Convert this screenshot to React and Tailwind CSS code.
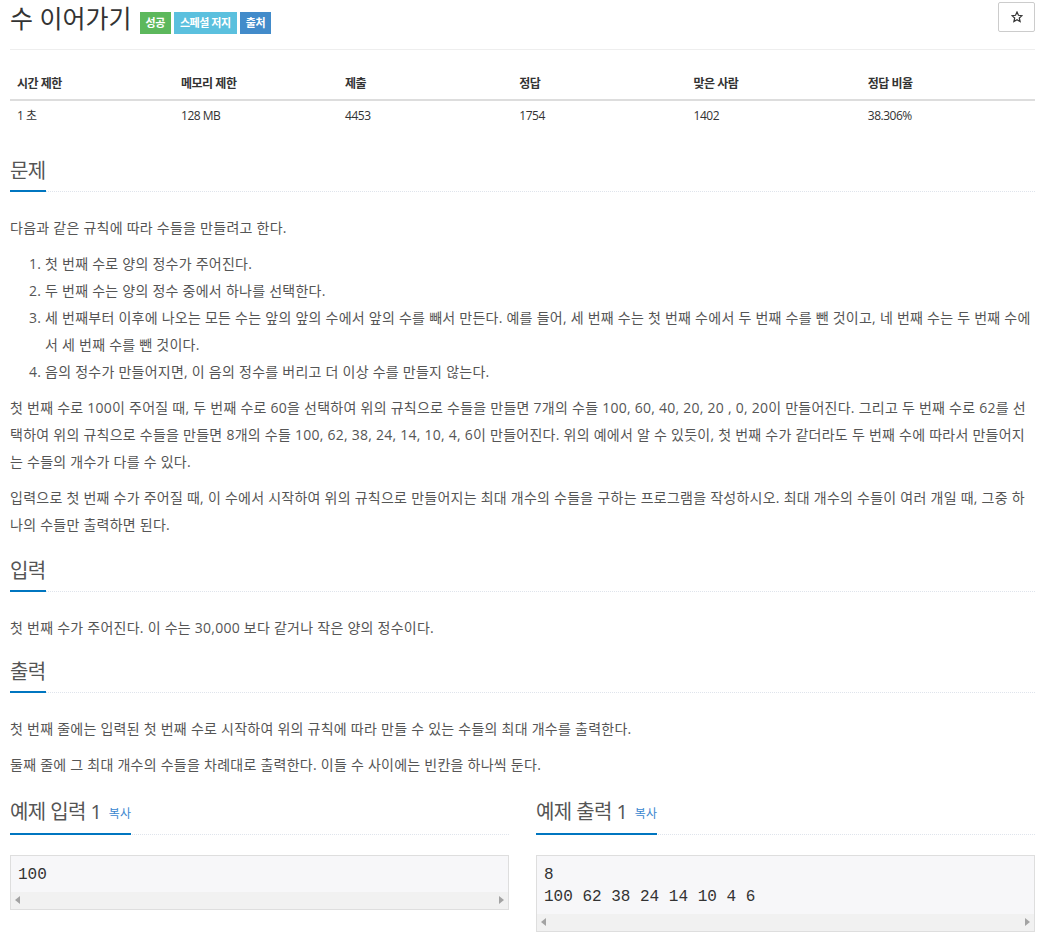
import React from "react";

const bodyFont = { fontFamily: '"Open Sans", "Noto Sans CJK KR", sans-serif' };

function Headline({ children, className = "mb-[22px]" }) {
  return (
    <div className={`border-b border-dotted border-[#dfe4ec] ${className}`}>
      <h2 className="inline-block text-[20px] leading-[28px] pb-[5px] -mb-px border-b-2 border-[#0076c0] text-[#555] tracking-[-0.03em] font-normal">
        {children}
      </h2>
    </div>
  );
}

function ScrollTrack() {
  return (
    <div className="h-[17px] bg-[#f1f1f1] flex items-center justify-between px-[4px]">
      <svg width="6" height="8" viewBox="0 0 6 8">
        <path d="M5 0 L0 4 L5 8 Z" fill="#a3a3a3" />
      </svg>
      <svg width="6" height="8" viewBox="0 0 6 8">
        <path d="M1 0 L6 4 L1 8 Z" fill="#a3a3a3" />
      </svg>
    </div>
  );
}

function Sample({ title, lines }) {
  return (
    <div>
      <Headline className="mb-[20px]">
        {title}{" "}
        <span className="ml-[3px] text-[12px] text-[#3a87cf] tracking-normal align-middle">복사</span>
      </Headline>
      <div className="border border-[#dedede] bg-[#f7f7f9]">
        <pre
          className="px-[7px] pt-[8px] pb-[6px] text-[16px] leading-[22px] text-[#333]"
          style={{ fontFamily: '"Liberation Mono", monospace' }}
        >
          {lines.join("\n")}
        </pre>
        <ScrollTrack />
      </div>
    </div>
  );
}

const stats = [
  ["시간 제한", "1 초", "w-[16%]"],
  ["메모리 제한", "128 MB", "w-[16%]"],
  ["제출", "4453", "w-[17%]"],
  ["정답", "1754", "w-[17%]"],
  ["맞은 사람", "1402", "w-[17%]"],
  ["정답 비율", "38.306%", "w-[17%]"],
];

export default function App() {
  return (
    <div className="min-h-screen bg-white px-[10px] text-[#555]" style={bodyFont}>
      {/* 제목 */}
      <div className="h-[50px] border-b border-[#eee] flex justify-between items-start">
        <div className="flex items-start">
          <h1 className="text-[25px] leading-[36px] text-[#333] font-normal">
            수 이어가기
          </h1>
          <div className="flex gap-[3px] ml-[8px] mt-[12px]">
            <span className="h-[22px] px-[6px] flex items-center bg-[#5cb85c] text-white text-[11px] font-bold tracking-[-0.04em]">성공</span>
            <span className="h-[22px] px-[6px] flex items-center bg-[#5bc0de] text-white text-[11px] font-bold tracking-[-0.04em]">스페셜 저지</span>
            <span className="h-[22px] px-[6px] flex items-center bg-[#428bca] text-white text-[11px] font-bold tracking-[-0.04em]">출처</span>
          </div>
        </div>
        <button className="mt-[2px] w-[37px] h-[30px] border border-[#ccc] rounded-[2px] flex items-center justify-center bg-white">
          <svg width="12" height="12" viewBox="0 0 24 24" fill="none" stroke="#333" strokeWidth="2.4" strokeLinejoin="miter">
            <path d="M12 2 L14.9 8.6 L22 9.3 L16.6 14 L18.2 21 L12 17.3 L5.8 21 L7.4 14 L2 9.3 L9.1 8.6 Z" />
          </svg>
        </button>
      </div>

      {/* 통계 */}
      <table className="w-full mt-[19px] text-[12px] text-[#333] tracking-[-0.04em]">
        <thead>
          <tr className="h-[31px] border-b-2 border-[#ddd]">
            {stats.map(([h, , w]) => (
              <th key={h} className={`${w} text-left font-bold px-[7px]`}>{h}</th>
            ))}
          </tr>
        </thead>
        <tbody>
          <tr className="h-[30px]">
            {stats.map(([h, v]) => (
              <td key={h} className="px-[7px]">{v}</td>
            ))}
          </tr>
        </tbody>
      </table>

      <div className="text-[14px] leading-[27px] break-all tracking-[0.25px]">
        {/* 문제 */}
        <div className="mt-[27px]">
          <Headline>문제</Headline>
          <p className="mb-[9px]">다음과 같은 규칙에 따라 수들을 만들려고 한다.</p>
          <ol className="list-decimal pl-[35px] mb-[9px]">
            <li>첫 번째 수로 양의 정수가 주어진다.</li>
            <li>두 번째 수는 양의 정수 중에서 하나를 선택한다.</li>
            <li>세 번째부터 이후에 나오는 모든 수는 앞의 앞의 수에서 앞의 수를 빼서 만든다. 예를 들어, 세 번째 수는 첫 번째 수에서 두 번째 수를 뺀 것이고, 네 번째 수는 두 번째 수에서 세 번째 수를 뺀 것이다.</li>
            <li>음의 정수가 만들어지면, 이 음의 정수를 버리고 더 이상 수를 만들지 않는다.</li>
          </ol>
          <p className="mb-[9px]">
            첫 번째 수로 100이 주어질 때, 두 번째 수로 60을 선택하여 위의 규칙으로 수들을 만들면 7개의 수들 100, 60, 40, 20, 20 , 0, 20이 만들어진다. 그리고 두 번째 수로 62를 선택하여 위의 규칙으로 수들을 만들면 8개의 수들 100, 62, 38, 24, 14, 10, 4, 6이 만들어진다. 위의 예에서 알 수 있듯이, 첫 번째 수가 같더라도 두 번째 수에 따라서 만들어지는 수들의 개수가 다를 수 있다.
          </p>
          <p>
            입력으로 첫 번째 수가 주어질 때, 이 수에서 시작하여 위의 규칙으로 만들어지는 최대 개수의 수들을 구하는 프로그램을 작성하시오. 최대 개수의 수들이 여러 개일 때, 그중 하나의 수들만 출력하면 된다.
          </p>
        </div>

        {/* 입력 */}
        <div className="mt-[19px]">
          <Headline>입력</Headline>
          <p>첫 번째 수가 주어진다. 이 수는 30,000 보다 같거나 작은 양의 정수이다.</p>
        </div>

        {/* 출력 */}
        <div className="mt-[17px]">
          <Headline>출력</Headline>
          <p className="mb-[9px]">첫 번째 줄에는 입력된 첫 번째 수로 시작하여 위의 규칙에 따라 만들 수 있는 수들의 최대 개수를 출력한다.</p>
          <p>둘째 줄에 그 최대 개수의 수들을 차례대로 출력한다. 이들 수 사이에는 빈칸을 하나씩 둔다.</p>
        </div>
      </div>

      {/* 예제 */}
      <div className="grid grid-cols-2 gap-[27px] mt-[20px] text-[14px]">
        <Sample title="예제 입력 1" lines={["100"]} />
        <Sample title="예제 출력 1" lines={["8", "100 62 38 24 14 10 4 6"]} />
      </div>
    </div>
  );
}
